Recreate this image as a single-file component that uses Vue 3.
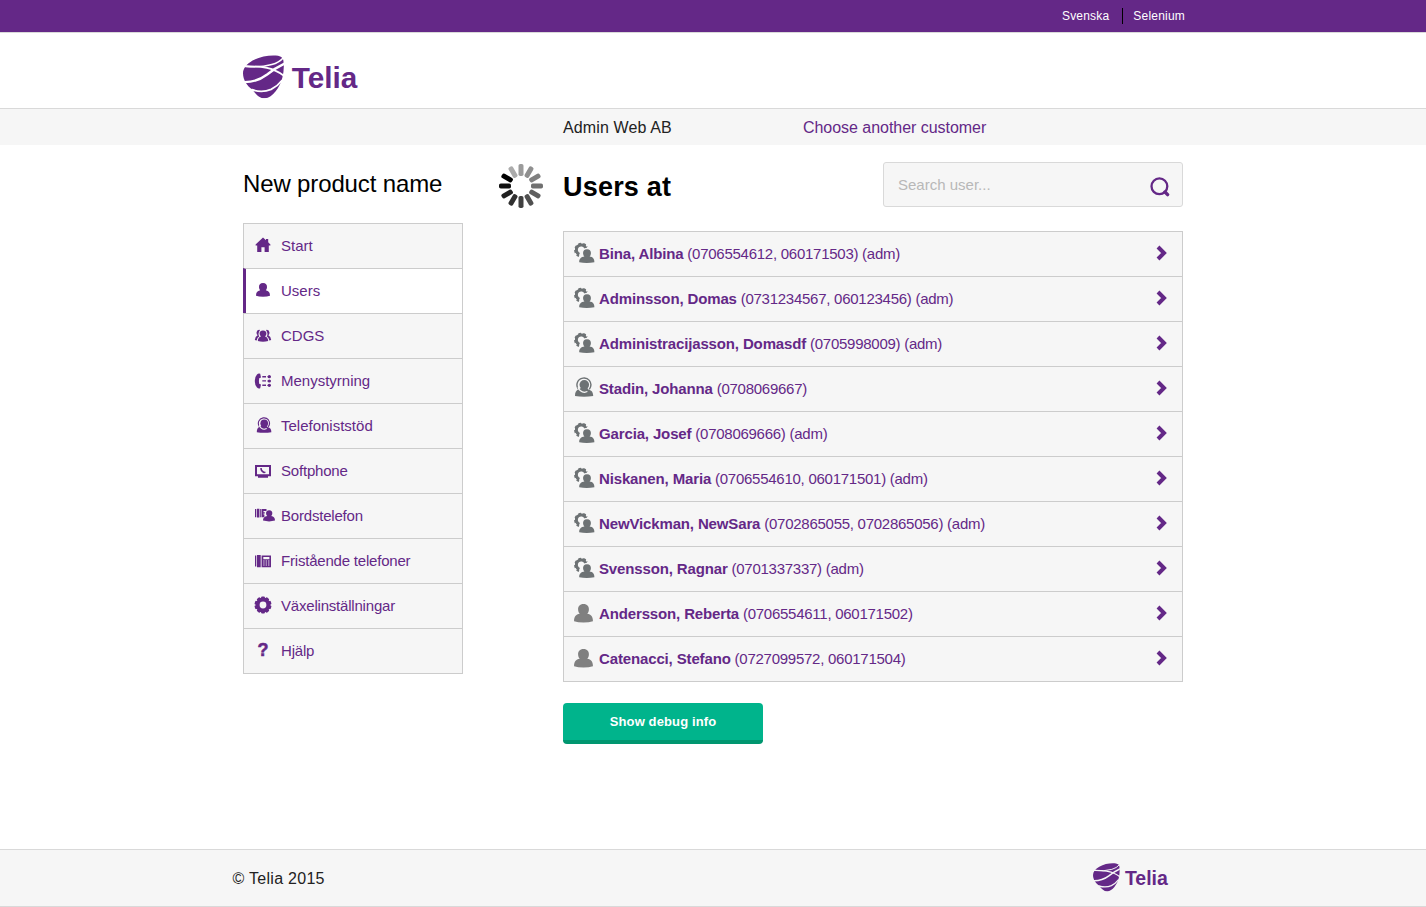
<script setup>
const menu = [
  ['home', 'Start'], ['user', 'Users'], ['group', 'CDGS'], ['menuphone', 'Menystyrning'],
  ['operator', 'Telefoniststöd'], ['softphone', 'Softphone'], ['deskuser', 'Bordstelefon'],
  ['desk', 'Fristående telefoner'], ['gear', 'Växelinställningar'], ['help', 'Hjälp'],
].map(([icon, label]) => ({ icon, label }))
const tight = ['Softphone', 'Bordstelefon', 'Fristående telefoner', 'Växelinställningar', 'Hjälp']

const users = [
  ['admin', 'Bina, Albina', '(0706554612, 060171503) (adm)'],
  ['admin', 'Adminsson, Domas', '(0731234567, 060123456) (adm)'],
  ['admin', 'Administracijasson, Domasdf', '(0705998009) (adm)'],
  ['operator', 'Stadin, Johanna', '(0708069667)'],
  ['admin', 'Garcia, Josef', '(0708069666) (adm)'],
  ['admin', 'Niskanen, Maria', '(0706554610, 060171501) (adm)'],
  ['admin', 'NewVickman, NewSara', '(0702865055, 0702865056) (adm)'],
  ['admin', 'Svensson, Ragnar', '(0701337337) (adm)'],
  ['user', 'Andersson, Reberta', '(0706554611, 060171502)'],
  ['user', 'Catenacci, Stefano', '(0727099572, 060171504)'],
].map(([icon, name, info]) => ({ icon, name, info }))

const spokes = ['#9b9b9b', '#8f8f8f', '#808080', '#707070', '#606060', '#505050', '#404040', '#303030', '#202020', '#101010', '#000', '#ababab']
const gearTeeth = Array.from({ length: 10 }, (_, i) => i * 36)
</script>

<template>
  <svg class="defs" width="0" height="0" aria-hidden="true">
    <symbol id="emblem" viewBox="9 8 124 131">
      <path d="M9 63C9 49 20 36 38 25C61 12 91 7 115 10Q130 13 131 24Q135 50 128 77C121 105 99 138 75 139C59 139 47 126 38 113C22 102 9 84 9 63Z" fill="currentColor" />
      <g fill="none" stroke="var(--bg)" stroke-linecap="round">
        <path d="M16 42Q60 47 96 37Q118 31 131 16" stroke-width="4.5" />
        <path d="M16 42Q82 42 108 56Q122 62 134 72" stroke-width="5.5" />
        <path d="M14 90Q52 90 82 67Q105 48 135 34" stroke-width="7" />
        <path d="M36 113Q66 124 94 112Q113 103 126 86" stroke-width="5.5" />
      </g>
    </symbol>
    <symbol id="home" viewBox="0 0 20 20"><path d="M10 2.4L2.6 9.4V10.6H4.2V17H8.4V12.3H11.6V17H15.8V10.6H17.4V9.4L15.2 7.3V3.9H13V5.2Z" /></symbol>
    <symbol id="user" viewBox="0 0 20 20"><path d="M10 3C7.2 3 5.8 4.8 6 7.3C6.1 8.8 6.6 9.6 7.2 10.2C4.3 10.8 3 12.4 3 15.7Q5.8 16.7 10 16.7T17 15.7C17 12.4 15.7 10.8 12.8 10.2C13.4 9.6 13.9 8.8 14 7.3C14.2 4.8 12.8 3 10 3Z" /></symbol>
    <symbol id="group" viewBox="0 0 20 20">
      <path d="M10 5.5C7.5 5.5 6.4 7 6.6 9Q6.8 10.5 8 11.4C6 12 5 13 4.8 16Q10 17.4 15.2 16C15 13 14 12 12 11.4Q13.2 10.5 13.4 9C13.6 7 12.5 5.5 10 5.5Z" />
      <path d="M7 4.9Q3.8 4.3 3.5 7.5Q3.4 9.2 4.6 10.2Q2.2 11.3 1.8 15.1L3.7 15.5Q4 12.6 6.3 11.3Q4.4 9 7 4.9ZM13 4.9Q16.2 4.3 16.5 7.5Q16.6 9.2 15.4 10.2Q17.8 11.3 18.2 15.1L16.3 15.5Q16 12.6 13.7 11.3Q15.6 9 13 4.9Z" />
    </symbol>
    <symbol id="menuphone" viewBox="0 0 20 20">
      <path d="M7.2 2.8L8 6.5L6.2 7.2Q5.6 10 6.2 12.8L8 13.5L7.2 17.2Q5.5 18 4 16.5Q1.8 14.5 1.8 10T4 3.5Q5.5 2 7.2 2.8Z" />
      <path d="M9.3 5.1H13V6.4H9.3ZM9.3 9.3H13V10.6H9.3ZM9.3 13.6H13V14.9H9.3Z" />
      <path d="M14.3 5.7H18M14.3 10H18M14.3 14.3H18" stroke="currentColor" stroke-width=".8" />
      <circle cx="16.3" cy="5.7" r="1.6" /><circle cx="16.3" cy="10" r="1.6" /><circle cx="16.3" cy="14.3" r="1.6" />
    </symbol>
    <symbol id="operator" viewBox="0 0 20 20">
      <circle cx="10.3" cy="7.8" r="4.8" />
      <path d="M4.3 12.2Q2 9 3.5 5.2C5.3 .6 12.2-.4 15.3 3.4Q18.6 7.8 15.3 12.3" fill="none" stroke="currentColor" stroke-width="1.4" />
      <path d="M4.8 12.2C1.9 13.3 1 15.2 1 19Q10 20.4 19.2 19C19.2 15.4 18 13.3 14.4 12.4L13 11H7Z" />
      <path d="M4 10.3Q5.8 14.9 10.5 15.4L13.4 14.5" stroke="var(--bg)" stroke-width="1.3" fill="none" />
    </symbol>
    <symbol id="softphone" viewBox="0 0 20 20">
      <path fill-rule="evenodd" d="M2 4H18V15.2H2ZM4 6V13.2H16V6ZM5 15.2H15V16.7H5Z" />
      <path d="M8 7Q7.8 10 11 11.5L12.4 11.2" fill="none" stroke="currentColor" stroke-width="1.5" />
    </symbol>
    <symbol id="deskuser" viewBox="0 0 20 20">
      <path d="M0 3H1.3V11.2H0ZM2 2.7H4.4V11.5H2ZM5.2 3H6.3V11.2H5.2ZM6.8 3H11.5V5H8.5V6.2H9.8V7.4H8.5V8.6H9.4V11.2H6.8Z" />
      <path d="M14.2 4.3C11.9 4.3 10.9 5.8 11.1 7.8Q11.2 9.2 12.2 10C9.4 10.6 8 11.6 8 14.6Q14.2 16.2 20 14.6C20 11.6 18.9 10.6 16.2 10Q17.2 9.2 17.3 7.8C17.5 5.8 16.5 4.3 14.2 4.3Z" />
    </symbol>
    <symbol id="desk" viewBox="0 0 20 20">
      <path fill-rule="evenodd" d="M2 4.5H3.3V15.5H2ZM4 4H7.7V16.2H4ZM8.6 4.5H18V16.2H8.6ZM10.3 6V8.2H16.4V6ZM10.3 9.4V10.6H11.5V9.4ZM12.7 9.4V10.6H13.9V9.4ZM15.1 9.4V10.6H16.4V9.4ZM10.3 11.5V12.6H11.5V11.5ZM12.7 11.5V12.6H13.9V11.5ZM15.1 11.5V12.6H16.4V11.5ZM10.3 13.5V14.6H11.5V13.5ZM12.7 13.5V14.6H13.9V13.5ZM15.1 13.5V14.6H16.4V13.5Z" />
    </symbol>
    <symbol id="gear" viewBox="0 0 20 20">
      <circle cx="10" cy="10" r="5.4" fill="none" stroke="currentColor" stroke-width="4" />
      <rect v-for="a in gearTeeth" :key="a" x="8.1" y="1.5" width="3.8" height="3" rx="1" :transform="`rotate(${a} 10 10)`" />
    </symbol>
    <symbol id="admin" viewBox="0 0 22 22">
      <path d="M6.3 12.3A4.9 4.9 0 1 1 12.8 6" fill="none" stroke="currentColor" stroke-width="3" />
      <path d="M6 14.2A6.5 6.5 0 1 1 14.2 5" fill="none" stroke="currentColor" stroke-width="1.8" stroke-dasharray="2.8 2" />
      <path d="M14 7.2C11.1 7.2 9.8 9.2 10.1 11.6Q10.2 13.4 11.4 14.6C8.1 15.1 6.2 16.6 6.2 20.2Q13.7 21.6 21.4 20.2C21.4 16.6 19.9 15.1 16.6 14.6Q17.8 13.4 17.9 11.6C18.2 9.2 16.9 7.2 14 7.2Z" class="outlined" />
    </symbol>
    <symbol id="chevron" viewBox="0 0 12 16"><path d="M2 2L8 8L2 14" fill="none" stroke="currentColor" stroke-width="4" /></symbol>
  </svg>

  <div class="page">
    <div class="topbar"><nav class="container toplinks"><a>Svenska</a><a class="account">Selenium</a></nav></div>
    <header>
      <div class="container">
        <svg class="logo" viewBox="0 0 116 44"><use href="#emblem" width="41" height="43.3" /><text x="48.7" y="32.8" class="wordmark" textLength="65.5" lengthAdjust="spacingAndGlyphs">Telia</text></svg>
      </div>
    </header>
    <div class="customer"><div class="container customer-row"><span class="company">Admin Web AB</span><a>Choose another customer</a></div></div>

    <main class="container columns">
      <aside>
        <h2>New product name</h2>
        <ul class="menu">
          <li v-for="item in menu" :key="item.label" :class="{ active: item.label === 'Users' }">
            <span v-if="item.icon === 'help'" class="icon question">?</span>
            <svg v-else class="icon" :class="item.icon"><use :href="'#' + item.icon" /></svg>
            <span :class="{ tight: tight.includes(item.label) }">{{ item.label }}</span>
          </li>
        </ul>
      </aside>
      <svg class="spinner" viewBox="-22 -22 44 44">
        <rect v-for="(color, i) in spokes" :key="i" x="-2.5" y="-22" width="5" height="12" rx="1.8" :fill="color" :transform="`rotate(${i * 30})`" />
      </svg>
      <section>
        <div class="heading">
          <h1>Users at</h1>
          <div class="search">
            <span>Search user...</span>
            <svg width="20" height="20" viewBox="0 0 20 20"><circle cx="9.4" cy="9.3" r="7.9" fill="none" stroke="currentColor" stroke-width="2.3" /><path d="M15 15L17.6 17.6" stroke="currentColor" stroke-width="3.4" stroke-linecap="round" /></svg>
          </div>
        </div>
        <ul class="users">
          <li v-for="user in users" :key="user.name">
            <svg class="avatar" :class="user.icon"><use :href="'#' + user.icon" /></svg>
            <span><b>{{ user.name }}</b> {{ user.info }}</span>
            <svg class="chevron"><use href="#chevron" /></svg>
          </li>
        </ul>
        <button type="button">Show debug info</button>
      </section>
    </main>

    <footer>
      <div class="footer-row">
        <span>© Telia 2015</span>
        <svg class="logo small" viewBox="0 0 116 44"><use href="#emblem" width="41" height="43.3" /><text x="48.7" y="32.8" class="wordmark" textLength="65.5" lengthAdjust="spacingAndGlyphs">Telia</text></svg>
      </div>
    </footer>
  </div>
</template>

<style>
body { margin: 0; background: #fff; }
</style>

<style scoped>
* { box-sizing: border-box; }
.defs { display: block; }
svg { fill: currentColor; flex: none; }
.page { --bg: #fff; height: 907px; display: flex; flex-direction: column; font: 15px/20px "Liberation Sans", Arial, sans-serif; color: #222; overflow: hidden; }
.container { width: 940px; margin: 0 auto; }
ul { list-style: none; margin: 0; padding: 0; }
.topbar { height: 33px; background: #642887; border-bottom: 1px solid #d9d9d9; }
.toplinks { height: 32px; display: flex; justify-content: flex-end; align-items: center; color: #fff; font-size: 12px; line-height: 16px; }
.toplinks a { letter-spacing: .2px; }
.account { margin: 0 -2px 0 13px; padding-left: 10px; border-left: 1px solid #000; }
header { height: 76px; padding-top: 22px; border-bottom: 1px solid #d9d9d9; }
.logo { display: block; width: 116px; height: 44px; color: #642887; overflow: visible; }
.wordmark { font: bold 30px "Liberation Sans", Arial, sans-serif; }
.outlined { stroke: var(--bg); stroke-width: 1.8px; paint-order: stroke; }
.customer { height: 36px; background: #f6f6f6; font-size: 16px; line-height: 37px; }
.customer-row { display: grid; grid-template-columns: 240px 380px; padding-left: 320px; }
.company { letter-spacing: .12px; }
.customer a { color: #642887; letter-spacing: -.04px; }
.columns { display: flex; flex: 1; align-items: flex-start; }
aside { width: 220px; }
h2 { margin: 24px 0 24px; font-size: 24px; line-height: 30px; font-weight: normal; letter-spacing: -.14px; color: #000; white-space: nowrap; }
.menu { --bg: #f6f6f6; border: 1px solid #ccc; border-top: 0; }
.menu li { height: 45px; display: flex; align-items: center; padding-left: 9px; background: #f6f6f6; border-top: 1px solid #ccc; color: #642887; }
.menu li.active { background: #fff; margin-left: -1px; padding-left: 7px; border-left: 3px solid #642887; }
.tight { letter-spacing: -.2px; }
.icon { width: 20px; height: 20px; margin-right: 8px; margin-top: -2px; }
.icon.operator { width: 16px; height: 16px; margin: -3px 9px 0 3px; }
.icon.deskuser { margin: 0 6px 0 2px; }
.icon.desk, .icon.softphone, .icon.menuphone { margin-top: 0; }
.question { font-weight: bold; font-size: 18px; text-align: center; -webkit-text-stroke: .5px currentColor; }
.spinner { width: 44px; height: 44px; margin: 19px 20px 0 36px; }
section { width: 620px; }
.heading { height: 86px; display: flex; justify-content: space-between; align-items: flex-start; padding-top: 17px; }
h1 { margin: 9px 0 0; font-size: 27px; line-height: 32px; letter-spacing: .2px; color: #000; }
.search { width: 300px; height: 45px; display: flex; justify-content: space-between; align-items: center; padding: 0 12px 0 14px; border: 1px solid #d9d9d9; border-radius: 3px; background: #f6f6f6; color: #b8b8b8; }
.search svg { color: #642887; margin-top: 5px; }
.users { --bg: #f6f6f6; border: 1px solid #ccc; border-top: 0; }
.users li { height: 45px; display: flex; align-items: center; padding: 0 12px 0 9px; border-top: 1px solid #ccc; background: #f6f6f6; color: #642887; }
.users li > span { flex: 1; letter-spacing: -.26px; }
.users b { letter-spacing: -.14px; }
.avatar { width: 22px; height: 22px; margin: -3px 4px 0 0; color: #6d7274; }
.avatar.user { width: 27px; height: 27px; margin: -2px 2px 0 -3px; color: #808080; }
.avatar.operator { width: 20px; height: 20px; margin: -4px 5px 0 1px; }
.chevron { width: 12px; height: 16px; margin: -2px 2px 0 0; }
button { display: block; width: 200px; height: 41px; margin-top: 21px; padding: 0; border: 0; border-bottom: 4px solid #00966f; border-radius: 4px; background: #00b48c; color: #fff; font: bold 13px/20px "Liberation Sans", Arial, sans-serif; letter-spacing: .12px; }
footer { height: 58px; --bg: #f6f6f6; border: solid #d9d9d9; border-width: 1px 0; background: #f6f6f6; font-size: 16px; }
.footer-row { width: 960px; height: 56px; margin: 0 auto; padding-right: 24px; display: flex; justify-content: space-between; align-items: center; }
.footer-row span { letter-spacing: .28px; margin: 2px 0 0 -.5px; }
.logo.small { width: 76px; height: 29px; margin-top: -1px; }
</style>
